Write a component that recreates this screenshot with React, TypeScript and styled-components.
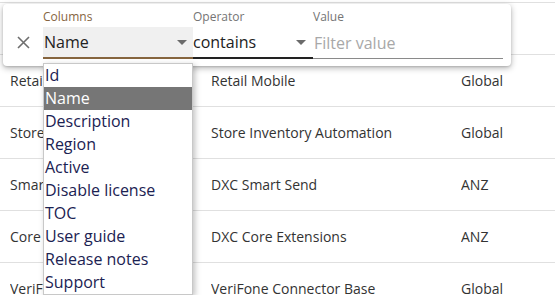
import styled, { createGlobalStyle } from 'styled-components';

const GlobalStyle = createGlobalStyle`
  html, body {
    margin: 0;
    padding: 0;
    background: #fff;
    font-family: 'Open Sans', 'Liberation Sans', sans-serif;
    overflow: hidden;
  }
`;

const rows = [
  { name: '', description: '', region: '' },
  { name: 'Retail Mobile', description: 'Retail Mobile', region: 'Global' },
  { name: 'Store Inventory Automation', description: 'Store Inventory Automation', region: 'Global' },
  { name: 'Smart Send', description: 'DXC Smart Send', region: 'ANZ' },
  { name: 'Core Extensions', description: 'DXC Core Extensions', region: 'ANZ' },
  { name: 'VeriFone Connector Base', description: 'VeriFone Connector Base', region: 'Global' },
];

const columns = [
  'Id',
  'Name',
  'Description',
  'Region',
  'Active',
  'Disable license',
  'TOC',
  'User guide',
  'Release notes',
  'Support',
];

const Caret = () => (
  <svg width="10" height="5" viewBox="0 0 10 5">
    <path d="M0 0 L10 0 L5 5 Z" fill="#6b6b6b" />
  </svg>
);

const App = () => {
  return (
    <Page>
      <GlobalStyle />
      <Table>
        {rows.map((r, i) => (
          <Row key={i}>
            <Cell>{r.name}</Cell>
            <Cell>{r.description}</Cell>
            <Cell>{r.region}</Cell>
          </Row>
        ))}
      </Table>

      <FilterPanel>
        <CloseButton aria-label="Delete">
          <svg width="13" height="13" viewBox="0 0 13 13">
            <path d="M1 1 L12 12 M12 1 L1 12" stroke="#6e6e6e" strokeWidth="1.6" />
          </svg>
        </CloseButton>
        <Field $width={150}>
          <Label $accent>Columns</Label>
          <Input $filled $underline="#86653f" $thick>
            <span>Name</span>
            <CaretBox $right={6}>
              <Caret />
            </CaretBox>
          </Input>
        </Field>
        <Field $width={120}>
          <Label>Operator</Label>
          <Input $underline="#222" $thick>
            <span>contains</span>
            <CaretBox $right={7}>
              <Caret />
            </CaretBox>
          </Input>
        </Field>
        <Field $width={190}>
          <Label>Value</Label>
          <Input $underline="#8a8a8a">
            <Placeholder>Filter value</Placeholder>
          </Input>
        </Field>
      </FilterPanel>

      <ColumnList>
        {columns.map((c) => (
          <Option key={c} $selected={c === 'Name'}>
            {c}
          </Option>
        ))}
      </ColumnList>
    </Page>
  );
};

const Page = styled.div`
  position: relative;
  width: 555px;
  height: 295px;
  overflow: hidden;
`;

const Table = styled.div`
  margin-top: 2px;
  border-top: 1px solid #e0e0e0;
`;

const Row = styled.div`
  display: grid;
  grid-template-columns: 201px 250px 1fr;
  align-items: center;
  height: 51px;
  padding-left: 10px;
  border-bottom: 1px solid #e0e0e0;
  font-size: 14px;
  color: #333;
`;

const Cell = styled.div`
  white-space: nowrap;
  overflow: hidden;
`;

const FilterPanel = styled.div`
  position: absolute;
  left: 3px;
  top: 4px;
  width: 508px;
  height: 62px;
  box-sizing: border-box;
  padding: 5px 8px 7px 0;
  display: flex;
  align-items: flex-end;
  background: #fff;
  border-radius: 4px;
  box-shadow: 0 2px 6px rgba(0, 0, 0, 0.3), 0 1px 2px rgba(0, 0, 0, 0.12);
`;

const CloseButton = styled.button`
  flex-shrink: 0;
  width: 40px;
  height: 30px;
  margin-bottom: 2px;
  padding: 0;
  border: none;
  background: transparent;
  display: flex;
  align-items: center;
  justify-content: center;
`;

const Field = styled.div<{ $width: number }>`
  flex-shrink: 0;
  width: ${(p) => p.$width}px;
  display: flex;
  flex-direction: column;
  gap: 2px;
`;

const Label = styled.div<{ $accent?: boolean }>`
  font-size: 12px;
  line-height: 16px;
  color: ${(p) => (p.$accent ? '#86653f' : '#757575')};
`;

const Input = styled.div<{ $filled?: boolean; $underline: string; $thick?: boolean }>`
  position: relative;
  height: ${(p) => (p.$thick ? 30 : 31)}px;
  display: flex;
  align-items: center;
  padding-left: ${(p) => (p.$filled ? 1 : 0)}px;
  background: ${(p) => (p.$filled ? '#f0f0f0' : 'transparent')};
  border-bottom: ${(p) => (p.$thick ? 2 : 1)}px solid ${(p) => p.$underline};
  font-size: 16px;
  color: #222;
`;

const CaretBox = styled.span<{ $right: number }>`
  position: absolute;
  right: ${(p) => p.$right}px;
  top: 13px;
  display: flex;
`;

const Placeholder = styled.span`
  color: #a8a8a8;
  padding-left: 1px;
`;

const ColumnList = styled.div`
  position: absolute;
  left: 43px;
  top: 63px;
  width: 148px;
  background: #fff;
  border: 1px solid #c8c8c8;
  box-shadow: 2px 2px 6px rgba(0, 0, 0, 0.25);
`;

const Option = styled.div<{ $selected?: boolean }>`
  height: 23px;
  line-height: 23px;
  padding-left: 1px;
  font-size: 16px;
  color: ${(p) => (p.$selected ? '#fff' : '#1b2252')};
  background: ${(p) => (p.$selected ? '#767676' : 'transparent')};
  white-space: nowrap;
`;

export default App;
